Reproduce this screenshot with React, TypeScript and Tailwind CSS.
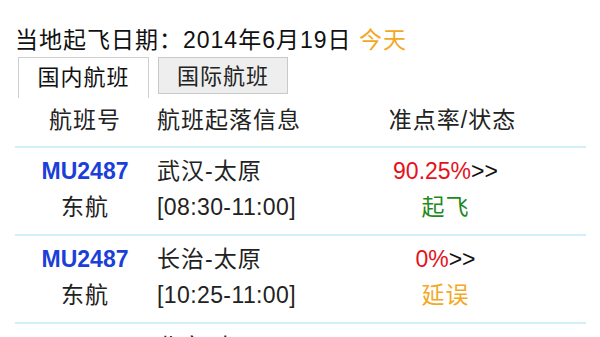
import React from 'react';

type Flight = {
  no: string;
  airline: string;
  route: string;
  time: string;
  rate: string;
  status: string;
  statusColor: string;
};

const flights: Flight[] = [
  {
    no: 'MU2487',
    airline: '东航',
    route: '武汉-太原',
    time: '[08:30-11:00]',
    rate: '90.25%',
    status: '起飞',
    statusColor: 'text-[#1f8a1f]',
  },
  {
    no: 'MU2487',
    airline: '东航',
    route: '长治-太原',
    time: '[10:25-11:00]',
    rate: '0%',
    status: '延误',
    statusColor: 'text-[#f4a81f]',
  },
  {
    no: 'CA1109',
    airline: '国航',
    route: '北京-太原',
    time: '[11:40-12:55]',
    rate: '85.50%',
    status: '计划',
    statusColor: 'text-[#1f8a1f]',
  },
];

const FlightRow = ({ f }: { f: Flight }) => (
  <div className="grid grid-cols-[140px_150px_281px] border-b-2 border-[#d2eef8] pt-[5px] pb-[9px] leading-[36px]">
    <div className="text-center">
      <div className="font-bold text-[#1b3fd8]">{f.no}</div>
      <div className="tracking-[1px]">{f.airline}</div>
    </div>
    <div className="pl-[2px]">
      <div className="tracking-[1px]">{f.route}</div>
      <div className="tracking-[0.4px]">{f.time}</div>
    </div>
    <div className="text-center">
      <div>
        <span className="text-[#e5121c]">{f.rate}</span>
        <span className="text-[#111]">&gt;&gt;</span>
      </div>
      <div className={`tracking-[1px] ${f.statusColor}`}>{f.status}</div>
    </div>
  </div>
);

export default function App() {
  return (
    <div
      className="h-[337px] w-[600px] overflow-hidden bg-white text-[#222]"
      style={{ fontFamily: '"Liberation Sans", "Noto Sans CJK SC", sans-serif' }}
    >
      {/* date line */}
      <div className="pl-[15px] pt-[26px] text-[23px] leading-[28px] text-[#111] tracking-[1px]">
        当地起飞日期：2014年6月19日 <span className="text-[#f4a81f]">今天</span>
      </div>

      {/* tabs */}
      <div className="mt-[3px] flex items-start pl-[18px] text-[22px] leading-[30px] tracking-[1px]">
        <div className="h-[41px] w-[131px] border-x border-t border-[#cfcfcf] bg-white pt-[5px] text-center text-[#111]">
          国内航班
        </div>
        <div className="ml-[9px] h-[37px] w-[130px] border border-[#c9c9c9] bg-[#eeeeee] pt-[4px] text-center text-[#222]">
          国际航班
        </div>
      </div>

      {/* table */}
      <div className="ml-[15px] w-[571px] text-[23px]">
        <div className="grid grid-cols-[140px_150px_281px] border-b-2 border-[#d2eef8] pt-[7px] pb-[11px] leading-[30px] tracking-[1px] text-[#222]">
          <div className="text-center">航班号</div>
          <div className="pl-[2px]">航班起落信息</div>
          <div className="pl-[14px] text-center">准点率/状态</div>
        </div>
        {flights.map((f, i) => (
          <FlightRow key={i} f={f} />
        ))}
      </div>
    </div>
  );
}
